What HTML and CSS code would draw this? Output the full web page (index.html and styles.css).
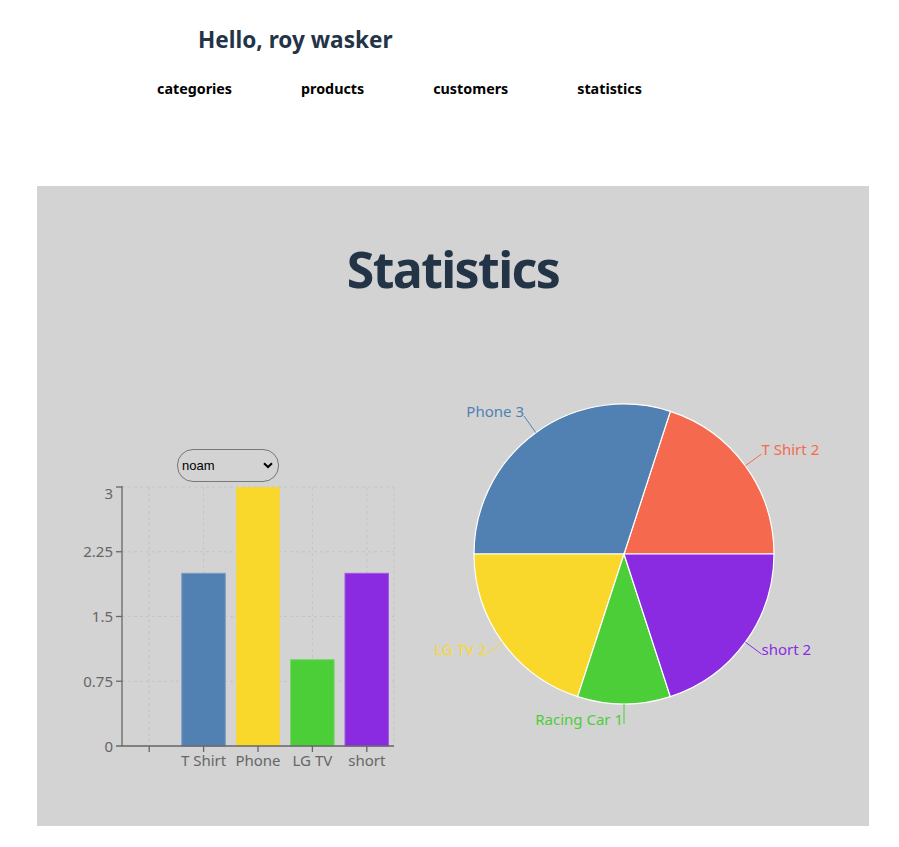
FILE: index.html
```html
<!DOCTYPE html>
<html>
<head>
<meta charset="utf-8">
<link rel="stylesheet" href="styles.css">
</head>
<body>
<div class="header">
  <h2 class="greeting">Hello, roy wasker</h2>
  <nav class="nav">
    <a class="nav-link">categories</a>
    <a class="nav-link">products</a>
    <a class="nav-link">customers</a>
    <a class="nav-link">statistics</a>
  </nav>
</div>
<main class="stats-box">
  <h1 class="stats-title">Statistics</h1>
  <div class="charts-row">
    <div class="bar-col">
      <div class="select-wrap">
        <select class="customer-select">
          <option>noam</option>
        </select>
        <svg class="chevron" width="10" height="7" viewBox="0 0 10 7"><path d="M1 1.2 L5 5 L9 1.2" fill="none" stroke="#000" stroke-width="2"/></svg>
      </div>
      <svg class="bar-chart" width="350" height="300" viewBox="0 0 350 300">
        <g stroke="#c4c4c4" stroke-dasharray="3 3" stroke-width="1">
          <line x1="65" y1="5" x2="337" y2="5"/>
          <line x1="65" y1="69.75" x2="337" y2="69.75"/>
          <line x1="65" y1="134.5" x2="337" y2="134.5"/>
          <line x1="65" y1="199.25" x2="337" y2="199.25"/>
          <line x1="92.2" y1="5" x2="92.2" y2="264"/>
          <line x1="146.6" y1="5" x2="146.6" y2="264"/>
          <line x1="201" y1="5" x2="201" y2="264"/>
          <line x1="255.4" y1="5" x2="255.4" y2="264"/>
          <line x1="309.8" y1="5" x2="309.8" y2="264"/>
          <line x1="337" y1="5" x2="337" y2="264"/>
        </g>
        <g>
          <rect x="124.8" y="91.3" width="43.5" height="172.7" fill="#5181b2" stroke="#7a9cc2" stroke-width="1"/>
          <rect x="179.2" y="5" width="43.5" height="259" fill="#f9d82b"/>
          <rect x="233.6" y="177.7" width="43.5" height="86.3" fill="#4bce38" stroke="#78d56a" stroke-width="1"/>
          <rect x="288" y="91.3" width="43.5" height="172.7" fill="#8a2be2" stroke="#a05ae0" stroke-width="1"/>
        </g>
        <g stroke="#666" stroke-width="1.3" fill="none">
          <line x1="65" y1="4" x2="65" y2="264"/>
          <line x1="59" y1="264" x2="337" y2="264"/>
          <line x1="59" y1="5" x2="65" y2="5"/>
          <line x1="59" y1="69.75" x2="65" y2="69.75"/>
          <line x1="59" y1="134.5" x2="65" y2="134.5"/>
          <line x1="59" y1="199.25" x2="65" y2="199.25"/>
          <line x1="92.2" y1="264" x2="92.2" y2="270"/>
          <line x1="146.6" y1="264" x2="146.6" y2="270"/>
          <line x1="201" y1="264" x2="201" y2="270"/>
          <line x1="255.4" y1="264" x2="255.4" y2="270"/>
          <line x1="309.8" y1="264" x2="309.8" y2="270"/>
        </g>
        <g class="tick-text" text-anchor="end">
          <text x="56" y="17">3</text>
          <text x="56" y="75">2.25</text>
          <text x="56" y="140">1.5</text>
          <text x="56" y="205">0.75</text>
          <text x="56" y="270">0</text>
        </g>
        <g class="tick-text" text-anchor="middle">
          <text x="146.6" y="284">T Shirt</text>
          <text x="201" y="284">Phone</text>
          <text x="255.4" y="284">LG TV</text>
          <text x="309.8" y="284">short</text>
        </g>
      </svg>
    </div>
    <svg class="pie-chart" width="430" height="360" viewBox="0 0 430 360">
      <g stroke="#fff" stroke-width="1.2">
        <path d="M204 174 L354 174 A150 150 0 0 0 250.35 31.34 Z" fill="#f56a4f"/>
        <path d="M204 174 L250.35 31.34 A150 150 0 0 0 54 174 Z" fill="#5181b2"/>
        <path d="M204 174 L54 174 A150 150 0 0 0 157.65 316.66 Z" fill="#f9d82b"/>
        <path d="M204 174 L157.65 316.66 A150 150 0 0 0 250.35 316.66 Z" fill="#4bce38"/>
        <path d="M204 174 L250.35 316.66 A150 150 0 0 0 354 174 Z" fill="#8a2be2"/>
      </g>
      <g fill="none" stroke-width="1">
        <path d="M325.35 85.8 L341.5 74.1" stroke="#f56a4f"/>
        <path d="M115.8 52.6 L104 36" stroke="#5181b2"/>
        <path d="M82.6 262.2 L66.5 274" stroke="#f9d82b"/>
        <path d="M204 324 L204 344" stroke="#4bce38"/>
        <path d="M325.4 262.2 L341.5 274" stroke="#8a2be2"/>
      </g>
      <g class="pie-label">
        <text x="341.5" y="75" fill="#f56a4f">T Shirt 2</text>
        <text x="104" y="37" fill="#5181b2" text-anchor="end">Phone 3</text>
        <text x="66.5" y="275" fill="#f9d82b" text-anchor="end">LG TV 2</text>
        <text x="203" y="345" fill="#4bce38" text-anchor="end">Racing Car 1</text>
        <text x="341.5" y="275" fill="#8a2be2">short 2</text>
      </g>
    </svg>
  </div>
</main>
</body>
</html>
```
FILE: styles.css
```css
html, body {
  margin: 0;
  padding: 0;
  background: #fff;
}
body {
  font-family: "Noto Sans", "Open Sans", sans-serif;
  color: #2c3e50;
  width: 899px;
}
.header {
  padding-top: 25px;
}
.greeting {
  margin: 0 0 0 198px;
  font-size: 22.6px;
  line-height: 30px;
  font-weight: 700;
  color: #243447;
}
.nav {
  display: flex;
  gap: 69px;
  margin: 24px 0 0 157px;
}
.nav-link {
  font-size: 14.3px;
  line-height: 20px;
  font-weight: 700;
  color: #000;
}
.stats-box {
  margin: 87px 0 0 37px;
  width: 832px;
  height: 640px;
  background: #d3d3d3;
  padding-top: 53px;
  box-sizing: border-box;
}
.stats-title {
  margin: 0;
  text-align: center;
  font-size: 50px;
  line-height: 60px;
  font-weight: 700;
  letter-spacing: -1.6px;
  color: #243447;
}
.charts-row {
  display: flex;
  align-items: flex-start;
  gap: 13px;
  padding-left: 20px;
  margin-top: 81px;
}
.bar-col {
  width: 350px;
  margin-top: 69px;
}
.select-wrap {
  position: relative;
  width: 102px;
  height: 33px;
  margin-left: 120px;
}
.customer-select {
  appearance: none;
  -webkit-appearance: none;
  width: 102px;
  height: 33px;
  border: 1px solid #777;
  border-radius: 16px;
  background: transparent;
  padding: 0 0 0 4px;
  font-family: "Liberation Sans", Arial, sans-serif;
  font-size: 13px;
  color: #000;
  box-sizing: border-box;
}
.chevron {
  position: absolute;
  right: 6px;
  top: 13px;
  pointer-events: none;
}
.bar-chart, .pie-chart {
  display: block;
}
.tick-text text {
  font-family: "Noto Sans", sans-serif;
  font-size: 15px;
  fill: #666;
}
.pie-label text {
  font-family: "Noto Sans", sans-serif;
  font-size: 15px;
}
```
